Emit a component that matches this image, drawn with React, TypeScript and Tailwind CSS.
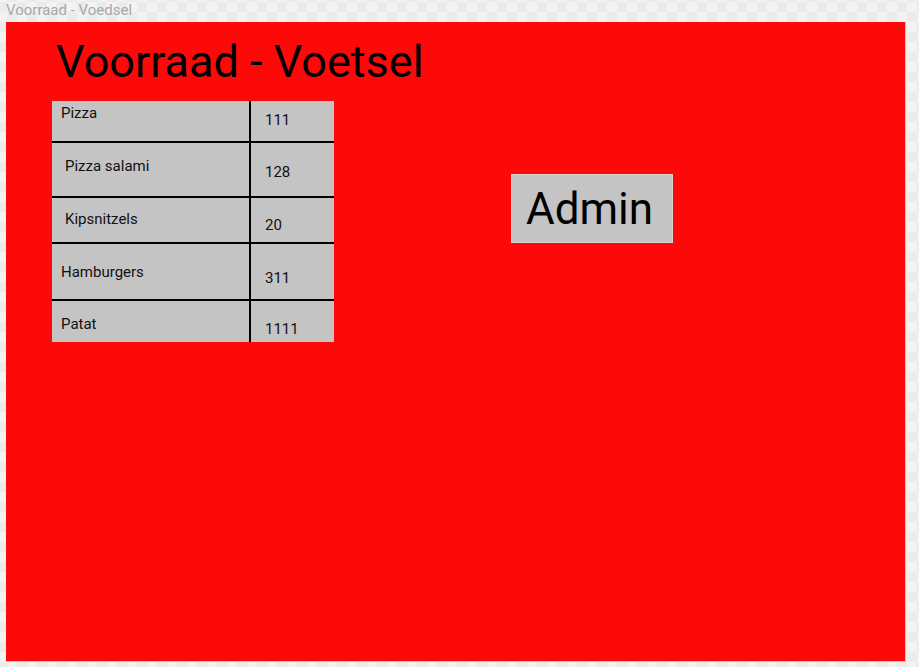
import React from 'react';

type Item = { name: string; amount: string; h: string; namePad: string; numPad: string; indent: string };

const items: Item[] = [
    { name: 'Pizza', amount: '111', h: 'h-[40px]', namePad: 'pt-[5px]', numPad: 'pt-[12px]', indent: 'pl-[9px]' },
    { name: 'Pizza salami', amount: '128', h: 'h-[53px]', namePad: 'pt-[16px]', numPad: 'pt-[22px]', indent: 'pl-[13px]' },
    { name: 'Kipsnitzels', amount: '20', h: 'h-[44px]', namePad: 'pt-[14px]', numPad: 'pt-[20px]', indent: 'pl-[13px]' },
    { name: 'Hamburgers', amount: '311', h: 'h-[55px]', namePad: 'pt-[21px]', numPad: 'pt-[27px]', indent: 'pl-[9px]' },
    { name: 'Patat', amount: '1111', h: 'h-[41px]', namePad: 'pt-[16px]', numPad: 'pt-[21px]', indent: 'pl-[9px]' },
];

/* ======================
   voorraad tabel
====================== */
const StockTable: React.FC = () => (
    <div className="w-[282px] bg-[#c4c4c4] mt-[79px] ml-[46px] self-start">
        {items.map((it, i) => (
            <div
                key={it.name}
                className={`flex ${i < items.length - 1 ? 'border-b-2 border-black' : ''}`}
            >
                <div className={`w-[199px] ${it.h} border-r-2 border-black ${it.indent} ${it.namePad} text-[15px] leading-none text-[#111]`}>
                    {it.name}
                </div>
                <div className={`flex-1 ${it.h} pl-[14px] ${it.numPad} text-[15px] leading-none text-[#111]`}>
                    {it.amount}
                </div>
            </div>
        ))}
    </div>
);

const App: React.FC = () => {
    return (
        <div
            className="w-[919px] h-[667px] overflow-hidden bg-[repeating-conic-gradient(#ebebeb_0%_25%,#f3f3f3_0%_50%)] bg-[length:20px_20px] bg-[position:7px_2px]"
            style={{ fontFamily: 'Roboto, "Noto Sans", sans-serif' }}
        >
            <div className="h-[22px] pl-[6px] pt-[3px] text-[15px] leading-none text-[#a8a8a8]">
                Voorraad - Voedsel
            </div>
            <div className="ml-[6px] w-[900px] h-[640px] bg-[#fe0909] border-r border-b border-[#f4b4b4] flex flex-col">
                <div className="h-[63px] pl-[50px] pt-[17px] text-[45px] leading-none text-black">
                    Voorraad - Voetsel
                </div>
                <div className="flex -mt-[63px]">
                    <StockTable />
                    <button className="ml-[177px] mt-[152px] w-[162px] h-[69px] bg-[#c4c4c4] border border-[#d2d2d2] flex items-center justify-start pl-[14px] text-[44px] leading-none text-black self-start">
                        Admin
                    </button>
                </div>
            </div>
        </div>
    );
};

export default App;
